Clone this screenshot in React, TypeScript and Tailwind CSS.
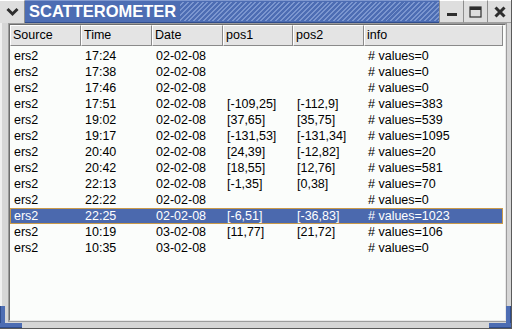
import React from 'react';

const rows = [
  ['ers2', '17:24', '02-02-08', '', '', '# values=0'],
  ['ers2', '17:38', '02-02-08', '', '', '# values=0'],
  ['ers2', '17:46', '02-02-08', '', '', '# values=0'],
  ['ers2', '17:51', '02-02-08', '[-109,25]', '[-112,9]', '# values=383'],
  ['ers2', '19:02', '02-02-08', '[37,65]', '[35,75]', '# values=539'],
  ['ers2', '19:17', '02-02-08', '[-131,53]', '[-131,34]', '# values=1095'],
  ['ers2', '20:40', '02-02-08', '[24,39]', '[-12,82]', '# values=20'],
  ['ers2', '20:42', '02-02-08', '[18,55]', '[12,76]', '# values=581'],
  ['ers2', '22:13', '02-02-08', '[-1,35]', '[0,38]', '# values=70'],
  ['ers2', '22:22', '02-02-08', '', '', '# values=0'],
  ['ers2', '22:25', '02-02-08', '[-6,51]', '[-36,83]', '# values=1023'],
  ['ers2', '10:19', '03-02-08', '[11,77]', '[21,72]', '# values=106'],
  ['ers2', '10:35', '03-02-08', '', '', '# values=0'],
];

const headers = ['Source', 'Time', 'Date', 'pos1', 'pos2', 'info'];
const selected = 10;

function TitleButton({ children }: { children: React.ReactNode }) {
  return (
    <div className="w-[24px] h-full flex items-center justify-center bg-[#dedede] border-l border-l-[#8e8e8e] border-t border-t-white border-b border-b-[#a0a0a0]">
      {children}
    </div>
  );
}

export default function App() {
  return (
    <div className="relative w-[512px] h-[329px] bg-[#d6d6d6] flex flex-col overflow-hidden font-['Liberation_Sans',Arial,sans-serif] text-black border-r border-b border-r-[#5a5a5a] border-b-[#5a5a5a]">
      {/* title bar */}
      <div className="h-[23px] flex shrink-0">
        <div className="w-[25px] h-full flex items-center justify-center bg-[#dedede] border-r border-r-[#8e8e8e] border-t border-t-white">
          <svg width="13" height="10" viewBox="0 0 13 10">
            <polyline points="1.5,2 6.5,7 11.5,2" fill="none" stroke="#2e2e2e" strokeWidth="3" />
          </svg>
        </div>
        <div className="flex-1 flex bg-[#4d6db3] border-t border-t-[#7f98cf] border-b border-b-[#2f4c8c]">
          <span className="pl-[4px] pr-[4px] text-white font-bold text-[16.5px] leading-[21px]">SCATTEROMETER</span>
          <div className="flex-1 my-[1px] bg-[repeating-linear-gradient(135deg,#4d6db3_0px,#4d6db3_2px,#7b96cf_2px,#7b96cf_3.4px)]" />
        </div>
        <TitleButton>
          <svg width="12" height="12" viewBox="0 0 12 12">
            <rect x="1" y="7" width="10" height="3" fill="#2e2e2e" />
          </svg>
        </TitleButton>
        <TitleButton>
          <svg width="13" height="12" viewBox="0 0 13 12">
            <rect x="1" y="1" width="11" height="10" fill="none" stroke="#2e2e2e" strokeWidth="1.2" />
            <rect x="1" y="1" width="11" height="3" fill="#2e2e2e" />
          </svg>
        </TitleButton>
        <TitleButton>
          <svg width="12" height="12" viewBox="0 0 12 12">
            <path d="M1.5 1.5 L10.5 10.5 M10.5 1.5 L1.5 10.5" stroke="#2e2e2e" strokeWidth="3" />
          </svg>
        </TitleButton>
      </div>

      {/* body */}
      <div className="flex-1 flex pl-[6px] pr-[4px] pb-[6px] border-l-2 border-l-[#f0f0f0]">
        <div className="flex-1 border border-[#9c9c9c] flex">
          <div className="flex-1 border border-t-[#6e6e6e] border-l-[#6e6e6e] border-r-[#e8e8e8] border-b-[#e8e8e8] bg-[#fbfdfb] pr-[2px] flex flex-col">
            <div className="grid grid-cols-[71px_71px_71px_70px_71px_1fr] h-[21px] shrink-0">
              {headers.map(h => (
                <div
                  key={h}
                  className="bg-[#e4e4e4] border-t border-l border-t-white border-l-white border-r border-b border-r-[#8a8a8a] border-b-[#8a8a8a] pl-[2px] text-[12.5px] leading-[19px]"
                >
                  {h}
                </div>
              ))}
            </div>
            <div className="pt-[2px] flex flex-col">
              {rows.map((r, i) => (
                <div
                  key={i}
                  className={
                    i === selected
                      ? 'grid grid-cols-[71px_71px_71px_70px_71px_1fr] h-[16px] bg-[#4b69ae] text-white border border-[#c99a4a]'
                      : 'grid grid-cols-[71px_71px_71px_70px_71px_1fr] h-[16px] border border-transparent'
                  }
                >
                  {r.map((c, j) => (
                    <div key={j} className="pl-[3px] text-[12.5px] leading-[14px] whitespace-nowrap">
                      {c}
                    </div>
                  ))}
                </div>
              ))}
            </div>
          </div>
        </div>
      </div>

      {/* resize corners */}
      <div className="absolute left-0 bottom-0 w-[5px] h-[22px] bg-[#4d6db3] border-l border-l-[#2f4c8c]" />
      <div className="absolute left-0 bottom-0 w-[22px] h-[5px] bg-[#4d6db3] border-b border-b-[#2f4c8c]" />
      <div className="absolute right-0 bottom-0 w-[5px] h-[22px] bg-[#4d6db3] border-r border-r-[#2f4c8c]" />
      <div className="absolute right-0 bottom-0 w-[22px] h-[5px] bg-[#4d6db3] border-b border-b-[#2f4c8c]" />
    </div>
  );
}
